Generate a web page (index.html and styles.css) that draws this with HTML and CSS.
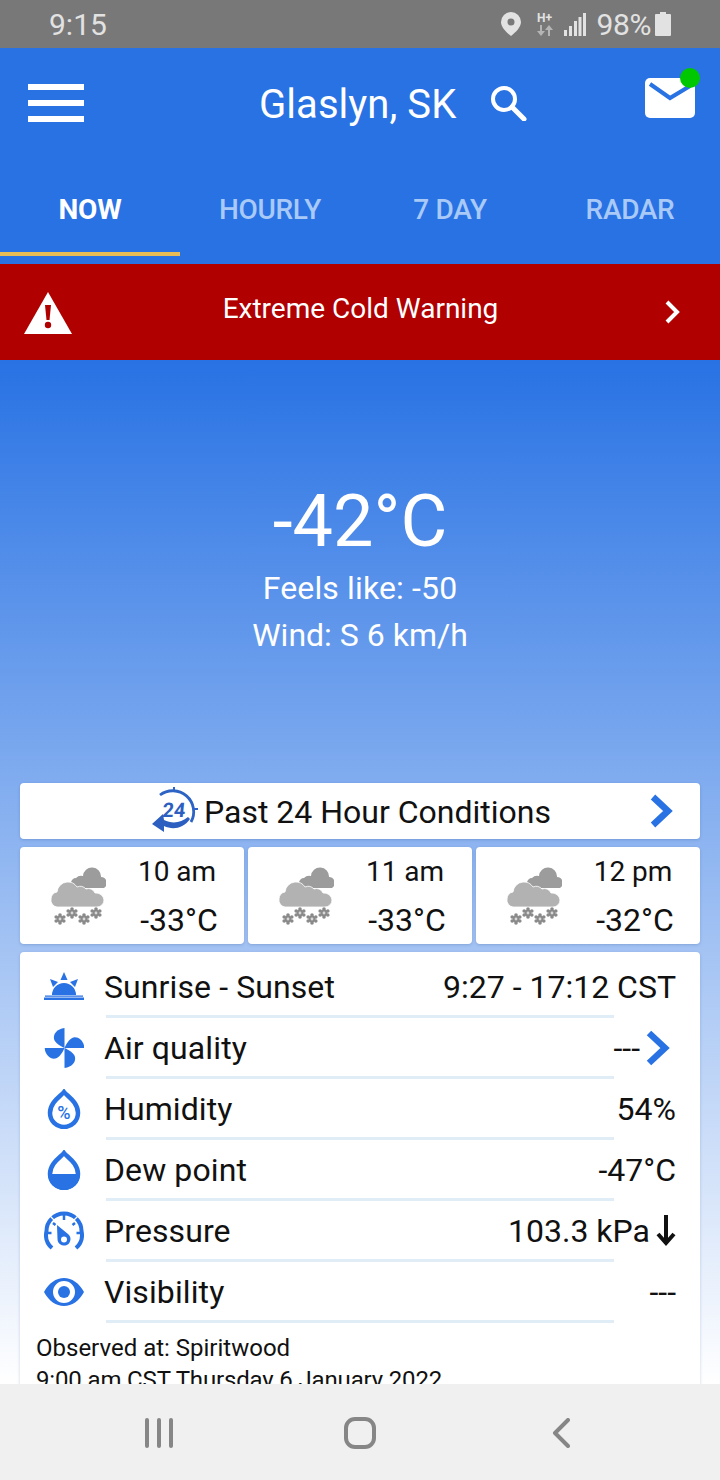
FILE: index.html
```html
<!DOCTYPE html>
<html lang="en">
<head>
<meta charset="utf-8">
<title>Glaslyn, SK</title>
<link rel="stylesheet" href="styles.css">
</head>
<body>
<svg class="defs" width="0" height="0" aria-hidden="true">
  <symbol id="snowflake" viewBox="0 0 12 12">
    <g fill="#8a8a8a">
      <circle cx="6" cy="2" r="1.800"/><circle cx="6" cy="10" r="1.800"/>
      <circle cx="2.200" cy="4" r="1.800"/><circle cx="9.800" cy="4" r="1.800"/>
      <circle cx="2.200" cy="8" r="1.800"/><circle cx="9.800" cy="8" r="1.800"/>
      <circle cx="6" cy="6" r="3.400"/>
    </g>
    <circle cx="6" cy="6" r="1.400" fill="#d8d8d8"/>
  </symbol>
  <symbol id="snow" viewBox="0 0 56 62">
    <path fill="#9c9c9c" d="M26 23a5 5 0 0 1 0-10a7 7 0 0 1 7-2a9 9 0 0 1 18 1a6 6 0 0 1 3 11z"/>
    <path fill="#b2b2b2" stroke="#fff" stroke-width=".8" d="M7 42a7 7 0 0 1-6-8a7 7 0 0 1 6-7a11 11 0 0 1 10-10a11 11 0 0 1 10 5a8 8 0 0 1 9 2a7 7 0 0 1 9 4a8 8 0 0 1 9 7a7 7 0 0 1-7 7z"/>
    <use href="#snowflake" x="4" y="48" width="12" height="12"/>
    <use href="#snowflake" x="16" y="42" width="12" height="12"/>
    <use href="#snowflake" x="28" y="48" width="12" height="12"/>
    <use href="#snowflake" x="40" y="42" width="12" height="12"/>
  </symbol>
  <symbol id="blade" viewBox="0 0 40 40">
    <path fill="#2872e4" d="M20.500 20V0C13 1 9 6 10 11C11 15 16 18 20.500 20z"/>
  </symbol>
</svg>

<div class="screen">
  <div class="status">
    <span class="status-time">9:15</span>
    <div class="status-right">
      <svg class="st-pin" viewBox="0 0 20 24"><path fill="#e2e2e2" fill-rule="evenodd" d="M10 0a10 10 0 0 1 10 10c0 5-5 10-10 14C5 20 0 15 0 10A10 10 0 0 1 10 0zm0 6.500a3.500 3.500 0 1 0 0 7a3.500 3.500 0 0 0 0-7z"/></svg>
      <div class="st-net">
        <span class="st-h">H+</span>
        <svg class="st-arrows" viewBox="0 0 16 11"><path fill="#b5b5b5" d="M3 0h2v6h3l-4 5-4-5h3zM11 11h2V5h3l-4-5-4 5h3z"/></svg>
      </div>
      <svg class="st-signal" viewBox="0 0 22 23"><path fill="#e2e2e2" d="M0 17h3v6H0zM5 13h3v10H5zM10 8h3v15h-3zM14.500 4h3v19h-3zM19 0h3v23h-3z"/></svg>
      <span class="status-pct">98%</span>
      <svg class="st-batt" viewBox="0 0 16 24"><path fill="#e2e2e2" d="M5 0h6v2h4a1 1 0 0 1 1 1v20a1 1 0 0 1-1 1H1a1 1 0 0 1-1-1V3a1 1 0 0 1 1-1h4z"/></svg>
    </div>
  </div>

  <main class="app">
    <header class="header">
      <div class="topbar">
        <div class="menu"><span></span><span></span><span></span></div>
        <h1 class="title">Glaslyn, SK</h1>
        <svg class="search" viewBox="0 0 37 36"><circle cx="14" cy="14" r="11" fill="none" stroke="#fff" stroke-width="4"/><path d="M22 22l12 12" stroke="#fff" stroke-width="5" stroke-linecap="round"/></svg>
        <div class="mail">
          <svg class="mail-icon" viewBox="0 0 50 40"><rect width="50" height="40" rx="5" fill="#fff"/><path d="M5 6l20 14 20-12" fill="none" stroke="#2872e4" stroke-width="4"/></svg>
          <span class="mail-dot"></span>
        </div>
      </div>
      <nav class="tabs">
        <a class="tab active">NOW</a>
        <a class="tab">HOURLY</a>
        <a class="tab">7 DAY</a>
        <a class="tab">RADAR</a>
      </nav>
    </header>

    <div class="alert">
      <svg class="alert-icon" viewBox="0 0 48 42"><path fill="#fff" d="M24 0l24 42H0z"/><path fill="#b00000" d="M21 13h6l-1.500 15h-3z"/><circle cx="24" cy="33" r="3.200" fill="#b00000"/></svg>
      <span class="alert-text">Extreme Cold Warning</span>
      <svg class="alert-chev" viewBox="0 0 16 24"><path d="M2 2l10 10L2 22" fill="none" stroke="#fff" stroke-width="4"/></svg>
    </div>

    <section class="hero">
      <div class="temp">-42°C</div>
      <div class="hero-line feels">Feels like: -50</div>
      <div class="hero-line wind">Wind: S 6 km/h</div>
    </section>

    <section class="cards">
      <div class="card past">
        <svg class="past-icon" viewBox="0 0 48 46">
          <path d="M10 8A21 21 0 0 1 41 35" fill="none" stroke="#2c63c4" stroke-width="2.800"/>
          <path d="M2 37L13 27l1 6C22 37 31 36 38 30l2 2C33 42 22 43 14 39l0 6z" fill="#2c5fbf"/>
          <path d="M24 0v5M48 22h-5" stroke="#2c63c4" stroke-width="2"/>
          <text class="past-24" x="15" y="30">24</text>
        </svg>
        <span class="past-text">Past 24 Hour Conditions</span>
        <svg class="past-chev" viewBox="0 0 24 34"><path d="M4 3l15 14L4 31" fill="none" stroke="#2872e4" stroke-width="6.500"/></svg>
      </div>

      <div class="hours">
        <div class="card hour">
          <svg class="hour-icon"><use href="#snow"/></svg>
          <div class="hour-data"><span>10 am</span><span class="hour-temp">-33°C</span></div>
        </div>
        <div class="card hour">
          <svg class="hour-icon"><use href="#snow"/></svg>
          <div class="hour-data"><span>11 am</span><span class="hour-temp">-33°C</span></div>
        </div>
        <div class="card hour">
          <svg class="hour-icon"><use href="#snow"/></svg>
          <div class="hour-data"><span>12 pm</span><span class="hour-temp">-32°C</span></div>
        </div>
      </div>

      <div class="card details">
        <div class="row">
          <svg class="row-icon" viewBox="0 0 40 40"><path fill="#2872e4" d="M20 5l3.500 8h-7zM6 12l8 3-5 5zM34 12l-8 3 5 5zM8 28a12 12 0 0 1 24 0zM1 28.500h38v1.200H1zM0 30.500h40V33H0z"/></svg>
          <span class="row-label">Sunrise - Sunset</span>
          <span class="row-value">9:27 - 17:12 CST</span>
        </div>
        <div class="rule"></div>
        <div class="row">
          <svg class="row-icon" viewBox="0 0 40 40">
            <use href="#blade"/>
            <use href="#blade" transform="rotate(90 20.500 20)"/>
            <use href="#blade" transform="rotate(180 20.500 20)"/>
            <use href="#blade" transform="rotate(270 20.500 20)"/>
          </svg>
          <span class="row-label">Air quality</span>
          <span class="row-value">---</span>
          <svg class="row-chev" viewBox="0 0 24 36"><path d="M3 3l16 15L3 33" fill="none" stroke="#2872e4" stroke-width="6.500"/></svg>
        </div>
        <div class="rule"></div>
        <div class="row">
          <svg class="row-icon" viewBox="0 0 40 40"><path d="M20 3c3 4 14 10 14 21a14 14 0 0 1-28 0C6 13 17 7 20 3z" fill="none" stroke="#2872e4" stroke-width="4.500"/><text class="pct" x="20" y="30">%</text></svg>
          <span class="row-label">Humidity</span>
          <span class="row-value">54%</span>
        </div>
        <div class="rule"></div>
        <div class="row">
          <svg class="row-icon" viewBox="0 0 40 40"><path d="M20 3c3 4 14 10 14 21a14 14 0 0 1-28 0C6 13 17 7 20 3z" fill="none" stroke="#2872e4" stroke-width="4.500"/><path d="M4 24h32a16 16 0 0 1-32 0z" fill="#2872e4"/></svg>
          <span class="row-label">Dew point</span>
          <span class="row-value">-47°C</span>
        </div>
        <div class="rule"></div>
        <div class="row">
          <svg class="row-icon" viewBox="0 0 40 40"><path d="M8 37A17.500 17.500 0 0 1 2.500 20 17.500 17.500 0 0 1 37.500 20a17.500 17.500 0 0 1-5.500 17" fill="none" stroke="#2872e4" stroke-width="4"/><path d="M6 5l4 4M34 5l-4 4" stroke="#fff" stroke-width="1.200"/><path d="M20 4v5M9 12l2.500 2M31 12l-2.500 2M4 22h3.500M36 22h-3.500" stroke="#2872e4" stroke-width="2.500"/><path fill-rule="evenodd" fill="#2872e4" d="M13 14l11 9a6.500 6.500 0 1 1-10.500 5zm7 11.500a3 3 0 1 0 0 6 3 3 0 0 0 0-6z"/></svg>
          <span class="row-label">Pressure</span>
          <span class="row-value">103.3 kPa</span>
          <svg class="row-arrow" viewBox="0 0 20 32"><path d="M10 0v29M2 19l8 9 8-9" fill="none" stroke="#111" stroke-width="4"/></svg>
        </div>
        <div class="rule"></div>
        <div class="row">
          <svg class="row-icon" viewBox="0 0 40 40"><path fill="#2872e4" fill-rule="evenodd" d="M0 20C5 11 12 6 20 6s15 5 20 14c-5 9-12 14-20 14S5 29 0 20zm20-11a11 11 0 1 0 0 22 11 11 0 0 0 0-22z"/><circle cx="20" cy="20" r="6" fill="#2872e4"/></svg>
          <span class="row-label">Visibility</span>
          <span class="row-value">---</span>
        </div>
        <div class="rule"></div>
        <p class="observed">Observed at: Spiritwood<br><span class="observed-time">9:00 am CST Thursday 6 January 2022</span></p>
      </div>
    </section>
  </main>

  <div class="navbar">
    <svg class="nav-recent" viewBox="0 0 30 30"><path d="M3 2v26M15 2v26M27 2v26" stroke="#868686" stroke-width="4" stroke-linecap="round"/></svg>
    <svg class="nav-home" viewBox="0 0 32 32"><rect x="2" y="2" width="28" height="28" rx="9" fill="none" stroke="#868686" stroke-width="4"/></svg>
    <svg class="nav-back" viewBox="0 0 18 30"><path d="M16 2L3 15l13 13" fill="none" stroke="#868686" stroke-width="4" stroke-linecap="round" stroke-linejoin="round"/></svg>
  </div>
</div>
</body>
</html>
```

FILE: styles.css
```css
* { box-sizing: border-box; }
html, body { margin: 0; padding: 0; }
body { font-family: Roboto, "Liberation Sans", sans-serif; background: #fff; color: #111; }
.defs { display: block; height: 0; }
.screen { width: 720px; height: 1480px; display: flex; flex-direction: column; overflow: hidden; }

.status { height: 48px; flex: none; background: #787878; color: #e2e2e2; display: flex; align-items: center; justify-content: space-between; padding: 0 49px 0 49px; }
.status-time { font-size: 30px; }
.status-right { display: flex; align-items: center; }
.st-pin { width: 20px; height: 24px; }
.st-net { width: 16px; margin-left: 16px; display: flex; flex-direction: column; align-items: center; }
.st-h { font-size: 12px; line-height: 13px; font-weight: 700; color: #e2e2e2; }
.st-arrows { width: 16px; height: 11px; }
.st-signal { width: 22px; height: 23px; margin-left: 11px; }
.status-pct { font-size: 30px; margin-left: 11px; letter-spacing: -.4px; }
.st-batt { width: 16px; height: 24px; margin-left: 4px; }

.app { flex: 1; min-height: 0; overflow: hidden; background: linear-gradient(to bottom, #2872e4 312px, #fff 1336px); }
.header { background: #2872e4; height: 216px; display: flex; flex-direction: column; }
.topbar { height: 112px; display: flex; align-items: flex-start; color: #fff; }
.menu { width: 56px; margin: 36px 0 0 28px; display: flex; flex-direction: column; gap: 10px; flex: none; }
.menu span { display: block; height: 6px; background: #fff; }
.title { margin: 34px 0 0 175px; font-size: 40px; line-height: 46px; font-weight: 400; white-space: nowrap; letter-spacing: .05px; }
.search { width: 37px; height: 36px; margin: 37px 0 0 34px; flex: none; }
.mail { position: relative; width: 50px; height: 40px; margin: 30px 0 0 118px; flex: none; }
.mail-icon { display: block; width: 50px; height: 40px; }
.mail-dot { position: absolute; left: 35px; top: -10px; width: 20px; height: 20px; border-radius: 50%; background: #00c800; }

.tabs { display: grid; grid-template-columns: repeat(4, 180px); height: 104px; }
.tab { height: 104px; padding-top: 32px; text-align: center; font-size: 28px; line-height: 36px; font-weight: 500; color: #a9c9f7; letter-spacing: -.3px; }
.tab.active { color: #fff; font-weight: 700; letter-spacing: -.2px; position: relative; }
.tab.active::after { content: ""; position: absolute; left: 0; right: 0; top: 92px; height: 4px; background: #e9bc55; }

.alert { height: 96px; background: #b00000; color: #fff; display: flex; align-items: center; padding: 0 39px 0 24px; }
.alert-icon { width: 48px; height: 42px; margin-top: 1px; flex: none; }
.alert-text { flex: 1; text-align: center; font-size: 28px; line-height: 36px; margin: -7px 16px 0 0; }
.alert-chev { width: 16px; height: 24px; flex: none; }

.hero { height: 423px; padding-top: 120px; color: #fff; text-align: center; }
.temp { font-size: 72px; line-height: 84px; }
.hero-line { font-size: 32px; line-height: 48px; }
.feels { letter-spacing: .15px; }
.wind { margin-top: -1px; }

.cards { padding: 0 20px; display: flex; flex-direction: column; gap: 8px; }
.card { background: #fff; border-radius: 4px; box-shadow: 0 1px 3px rgba(40, 80, 140, .25); }
.past { height: 56px; display: flex; align-items: center; padding: 2px 27px 0 130px; }
.past-icon { width: 48px; height: 46px; margin-top: -4px; flex: none; }
.past-24 { font: 700 20px Roboto, sans-serif; fill: #2c5fbf; transform: skewX(-6deg); }
.past-text { font-size: 32px; margin-left: 6px; flex: 1; }
.past-chev { width: 24px; height: 34px; flex: none; margin-top: -2px; }

.hours { display: grid; grid-template-columns: repeat(3, 224px); gap: 4px; }
.hour { height: 97px; display: flex; padding: 18px 0 0 30px; }
.hour-icon { width: 56px; height: 62px; flex: none; }
.hour-data { width: 106px; margin: -18px 0 0 18px; display: flex; flex-direction: column; align-items: center; font-size: 28px; padding-top: 8px; line-height: 34px; }
.hour-temp { font-size: 32px; margin: 14px 0 0 4px; }

.details { padding: 5px 24px 0 24px; min-height: 500px; }
.row { height: 58px; padding-top: 2px; display: flex; align-items: center; font-size: 32px; }
.row-icon { width: 40px; height: 40px; flex: none; }
.row-label { margin-left: 20px; flex: 1; letter-spacing: .1px; }
.row-chev { width: 24px; height: 36px; margin: 0 6px 0 6px; flex: none; }
.row-arrow { width: 20px; height: 32px; margin-left: 6px; flex: none; }
.pct { font: 500 18px Roboto, sans-serif; fill: #2872e4; text-anchor: middle; }
.rule { height: 3px; width: 508px; margin-left: 62px; background: #e0ecf6; }
.observed { margin: 9px 0 0 -8px; font-size: 24px; line-height: 32px; color: #111; }
.observed-time { letter-spacing: -.15px; }

.navbar { height: 96px; flex: none; background: #f0f0f0; display: flex; position: relative; align-items: flex-start; padding: 33px 0 0 144px; }
.nav-recent { width: 30px; height: 32px; }
.nav-home { width: 32px; height: 32px; margin-left: 170px; }
.nav-back { width: 18px; height: 30px; margin: 1px 0 0 176px; }
```
